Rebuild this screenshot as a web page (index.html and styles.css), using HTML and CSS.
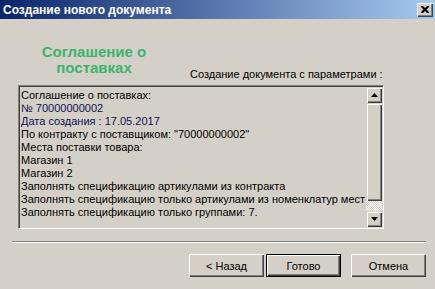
FILE: index.html
```html
<!DOCTYPE html>
<html lang="ru">
<head>
<meta charset="utf-8">
<link rel="stylesheet" href="styles.css">
</head>
<body>
<div class="window">
  <div class="titlebar">
    <span class="title">Создание нового документа</span>
    <button class="close" aria-label="Закрыть">
      <svg width="8" height="7" viewBox="0 0 8 7"><path d="M0 0h2l2 2 2-2h2v1l-2.5 2.5L8 6v1H6L4 5 2 7H0V6l2.5-2.5L0 1z" fill="#000"/></svg>
    </button>
  </div>
  <div class="content">
    <div class="top">
      <div class="heading">Соглашение о<br>поставках</div>
      <div class="label">Создание документа с параметрами :</div>
    </div>
    <div class="listbox">
      <div class="lines">
        <div>Соглашение о поставках:</div>
        <div class="navy">№ 70000000002</div>
        <div class="navy">Дата создания : 17.05.2017</div>
        <div>По контракту с поставщиком: "70000000002"</div>
        <div>Места поставки товара:</div>
        <div>Магазин 1</div>
        <div>Магазин 2</div>
        <div>Заполнять спецификацию артикулами из контракта</div>
        <div>Заполнять спецификацию только артикулами из номенклатур мест</div>
        <div>Заполнять спецификацию только группами: 7.</div>
      </div>
      <div class="scrollbar">
        <div class="sbtn"><svg width="7" height="4" viewBox="0 0 7 4"><path d="M3.5 0L7 4H0z" fill="#000"/></svg></div>
        <div class="thumb"></div>
        <div class="track"></div>
        <div class="sbtn"><svg width="7" height="4" viewBox="0 0 7 4"><path d="M0 0h7L3.5 4z" fill="#000"/></svg></div>
      </div>
    </div>
  </div>
  <div class="separator"></div>
  <div class="buttons">
    <button class="btn">&lt; Назад</button>
    <button class="btn default">Готово</button>
    <button class="btn cancel">Отмена</button>
  </div>
</div>
</body>
</html>
```
FILE: styles.css
```css
html, body {
  margin: 0;
  padding: 0;
  background: #d4d0c8;
}
.window {
  width: 435px;
  height: 289px;
  background: #d4d0c8;
  font-family: "Liberation Sans", Arial, sans-serif;
  font-size: 11px;
  color: #000;
  overflow: hidden;
}
.titlebar {
  height: 19px;
  display: flex;
  align-items: center;
  justify-content: space-between;
  padding: 0 2px 0 3px;
  background: linear-gradient(to right, #0a246a, #a6caf0);
  box-sizing: border-box;
}
.title {
  color: #fff;
  font-weight: bold;
  font-size: 12px;
}
.close {
  width: 16px;
  height: 14px;
  padding: 0;
  margin: 0;
  display: flex;
  align-items: center;
  justify-content: center;
  background: #d4d0c8;
  border: none;
  box-shadow: inset 1px 1px 0 #fff, inset -1px -1px 0 #404040, inset -2px -2px 0 #808080;
}
.content {
  padding-left: 18px;
}
.top {
  display: flex;
  height: 66px;
}
.heading {
  width: 152px;
  padding-top: 25px;
  text-align: center;
  color: #3cb46e;
  font-weight: bold;
  font-size: 15px;
  line-height: 16px;
}
.label {
  align-self: flex-end;
  margin-left: 20px;
  margin-bottom: 4px;
  line-height: 13px;
}
.listbox {
  width: 366px;
  height: 144px;
  box-sizing: border-box;
  display: flex;
  border-top: 1px solid #808080;
  border-left: 1px solid #808080;
  border-right: 1px solid #fff;
  border-bottom: 1px solid #fff;
  box-shadow: inset 1px 1px 0 #404040, inset -1px -1px 0 #d4d0c8;
  padding: 1px;
}
.lines {
  flex: 1;
  overflow: hidden;
  white-space: nowrap;
  padding: 2px 0 0 1px;
  line-height: 13px;
}
.navy {
  color: #101050;
}
.scrollbar {
  width: 16px;
  display: flex;
  flex-direction: column;
}
.sbtn {
  height: 16px;
  flex: none;
  display: flex;
  align-items: center;
  justify-content: center;
  background: #d4d0c8;
  box-sizing: border-box;
  box-shadow: inset 1px 1px 0 #d4d0c8, inset 2px 2px 0 #fff, inset -1px -1px 0 #404040, inset -2px -2px 0 #808080;
}
.thumb {
  height: 98px;
  flex: none;
  background: #d4d0c8;
  box-shadow: inset 1px 1px 0 #d4d0c8, inset 2px 2px 0 #fff, inset -1px -1px 0 #404040, inset -2px -2px 0 #808080;
}
.track {
  flex: 1;
  background-color: #fff;
  background-image: repeating-conic-gradient(#d4d0c8 0 25%, #fff 0 50%);
  background-size: 2px 2px;
}
.separator {
  margin: 12px 9px 0 12px;
  border-top: 1px solid #808080;
  border-bottom: 1px solid #fff;
  height: 0;
}
.buttons {
  display: flex;
  justify-content: flex-end;
  padding-right: 9px;
  margin-top: 11px;
}
.btn {
  width: 75px;
  height: 23px;
  padding: 0;
  margin: 0;
  font-family: "Liberation Sans", Arial, sans-serif;
  font-size: 11px;
  color: #000;
  background: #d4d0c8;
  border: none;
  box-shadow: inset 1px 1px 0 #fff, inset -1px -1px 0 #404040, inset -2px -2px 0 #808080;
}
.btn.default {
  margin-left: 2px;
  box-shadow: inset 0 0 0 1px #000, inset 2px 2px 0 #fff, inset -2px -2px 0 #404040, inset -3px -3px 0 #808080;
}
.btn.cancel {
  margin-left: 10px;
}
```
